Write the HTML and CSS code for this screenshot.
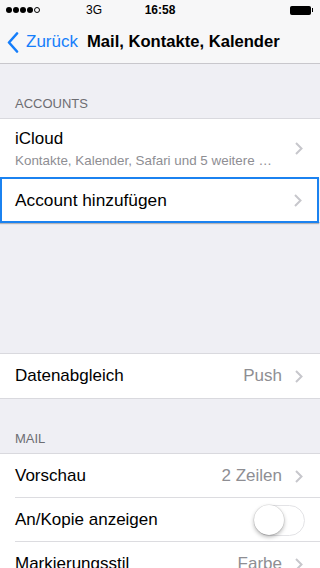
FILE: index.html
```html
<!DOCTYPE html>
<html lang="de">
<head>
<meta charset="utf-8">
<title>Mail, Kontakte, Kalender</title>
<link rel="stylesheet" href="styles.css">
</head>
<body>
<div class="screen">
  <header class="topbar">
    <div class="status">
      <div class="signal">
        <span class="dot"></span><span class="dot"></span><span class="dot"></span><span class="dot"></span><span class="dot empty"></span>
      </div>
      <span class="carrier">3G</span>
      <span class="time">16:58</span>
      <div class="battery"><span class="battery-fill"></span><span class="battery-nub"></span></div>
    </div>
    <nav class="nav">
      <a class="back">
        <svg class="back-icon" width="12" height="21" viewBox="0 0 12 21"><path d="M10 1.5 L2 10.5 L10 19.5" fill="none" stroke="#157efb" stroke-width="2.6" stroke-linecap="round" stroke-linejoin="round"/></svg>
        <span>Zurück</span>
      </a>
      <h1 class="title">Mail, Kontakte, Kalender</h1>
    </nav>
  </header>

  <div class="section-header">ACCOUNTS</div>
  <div class="group">
    <div class="row tall">
      <div class="row-text">
        <div class="label">iCloud</div>
        <div class="sub">Kontakte, Kalender, Safari und 5 weitere …</div>
      </div>
      <svg class="chev" width="8" height="13" viewBox="0 0 8 13"><path d="M1 1 L6.5 6.5 L1 12" fill="none" stroke="#c7c7cc" stroke-width="2"/></svg>
    </div>
    <div class="row selected">
      <div class="label">Account hinzufügen</div>
      <svg class="chev" width="8" height="13" viewBox="0 0 8 13"><path d="M1 1 L6.5 6.5 L1 12" fill="none" stroke="#c7c7cc" stroke-width="2"/></svg>
    </div>
  </div>

  <div class="spacer"></div>

  <div class="group">
    <div class="row">
      <div class="label">Datenabgleich</div>
      <span class="value">Push</span>
      <svg class="chev" width="8" height="13" viewBox="0 0 8 13"><path d="M1 1 L6.5 6.5 L1 12" fill="none" stroke="#c7c7cc" stroke-width="2"/></svg>
    </div>
  </div>

  <div class="section-header">MAIL</div>
  <div class="group">
    <div class="row sep">
      <div class="label">Vorschau</div>
      <span class="value">2 Zeilen</span>
      <svg class="chev" width="8" height="13" viewBox="0 0 8 13"><path d="M1 1 L6.5 6.5 L1 12" fill="none" stroke="#c7c7cc" stroke-width="2"/></svg>
    </div>
    <div class="row sep">
      <div class="label">An/Kopie anzeigen</div>
      <div class="toggle"><span class="knob"></span></div>
    </div>
    <div class="row">
      <div class="label">Markierungsstil</div>
      <span class="value">Farbe</span>
      <svg class="chev" width="8" height="13" viewBox="0 0 8 13"><path d="M1 1 L6.5 6.5 L1 12" fill="none" stroke="#c7c7cc" stroke-width="2"/></svg>
    </div>
  </div>
</div>
</body>
</html>
```

FILE: styles.css
```css
* { box-sizing: border-box; }
html, body { margin: 0; padding: 0; }
body {
  background: #efeff4;
  font-family: "Liberation Sans", Arial, sans-serif;
  color: #000;
  width: 320px;
  height: 568px;
  overflow: hidden;
}
.screen { width: 320px; }

.topbar {
  background: #f7f7f8;
  border-bottom: 1px solid #c8c7cc;
}
.status {
  height: 20px;
  display: flex;
  align-items: center;
  position: relative;
  padding: 0 7px 0 6px;
  font-size: 12px;
}
.signal { display: flex; gap: 1px; width: 80px; }
.dot {
  width: 6px; height: 6px;
  border-radius: 50%;
  background: #000;
}
.dot.empty { background: transparent; border: 1px solid #000; }
.carrier { font-size: 12px; }
.time {
  position: absolute;
  left: 0; right: 0;
  text-align: center;
  font-weight: bold;
  pointer-events: none;
}
.battery {
  margin-left: auto;
  display: flex;
  align-items: center;
}
.battery-fill {
  width: 21px; height: 9px;
  background: #000;
  border: 1px solid #000;
  border-radius: 1.5px;
}
.battery-nub {
  width: 1.5px; height: 4px;
  background: #000;
  margin-left: 0.5px;
}

.nav {
  height: 43px;
  display: flex;
  align-items: center;
  padding-left: 7px;
}
.back {
  display: flex;
  align-items: center;
  color: #157efb;
  font-size: 17px;
  gap: 7px;
}
.back-icon { margin-top: 1px; }
.title {
  margin: 0 0 0 9px;
  font-size: 16.6px;
  font-weight: bold;
}

.section-header {
  padding: 32px 15px 6px;
  font-size: 13px;
  color: #6d6d72;
  line-height: 16px;
  height: 54px;
}

.group {
  background: #fff;
  border-top: 1px solid #d9d9de;
  border-bottom: 1px solid #d9d9de;
}
.row {
  height: 44px;
  display: flex;
  align-items: center;
  padding: 0 17px 0 15px;
  position: relative;
  font-size: 17px;
}
.row.tall { height: 58px; padding-top: 1px; }
.row-text { flex: 1; }
.label { flex: 1; }
.sub {
  font-size: 13.4px;
  color: #8e8e93;
  margin-top: 4px;
}
.row.selected {
  height: 46px;
  margin: 0 1px -1px 0;
  border: 2px solid #1b82f0;
  padding-left: 13px;
  padding-right: 15px;
  box-shadow: 0 1px 1px rgba(0,0,0,0.25);
}
.row.selected .label { font-size: 17.3px; }
.value {
  color: #8e8e93;
  margin-right: 13px;
}
.chev { flex: none; }
.row.sep::after {
  content: "";
  position: absolute;
  left: 15px; right: 0; bottom: 0;
  border-bottom: 1px solid #dcdce0;
}
.spacer { height: 130px; }

.toggle {
  width: 51px; height: 31px;
  border-radius: 16px;
  border: 1.5px solid #e3e3e6;
  background: #fff;
  position: relative;
  margin-right: -2px;
}
.knob {
  position: absolute;
  left: -1px; top: -1px;
  width: 30px; height: 30px;
  border-radius: 50%;
  background: #fff;
  box-shadow: 0 2px 4px rgba(0,0,0,0.3), 0 0 0 0.5px rgba(0,0,0,0.12);
}
```
